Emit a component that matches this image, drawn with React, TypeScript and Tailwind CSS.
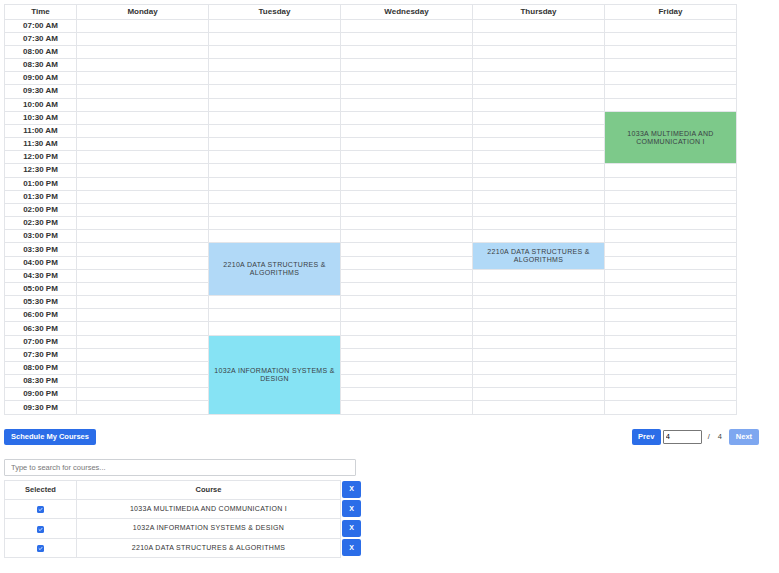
import React from 'react';

const days = ['Monday', 'Tuesday', 'Wednesday', 'Thursday', 'Friday'];

const times: string[] = [];
for (let h = 7; h <= 21; h++) {
  for (const m of ['00', '30']) {
    const hr = h > 12 ? h - 12 : h;
    const ap = h >= 12 ? 'PM' : 'AM';
    times.push(`${String(hr).padStart(2, '0')}:${m} ${ap}`);
  }
}

interface CourseEvent {
  day: number;
  start: number;
  span: number;
  title: string;
  color: string;
}

const events: CourseEvent[] = [
  { day: 4, start: 7, span: 4, title: '1033A MULTIMEDIA AND COMMUNICATION I', color: 'bg-[#7dc98a]' },
  { day: 1, start: 17, span: 4, title: '2210A DATA STRUCTURES & ALGORITHMS', color: 'bg-[#b1d9f7]' },
  { day: 3, start: 17, span: 2, title: '2210A DATA STRUCTURES & ALGORITHMS', color: 'bg-[#b1d9f7]' },
  { day: 1, start: 24, span: 6, title: '1032A INFORMATION SYSTEMS & DESIGN', color: 'bg-[#86e3f4]' },
];

const courses = [
  '1033A MULTIMEDIA AND COMMUNICATION I',
  '1032A INFORMATION SYSTEMS & DESIGN',
  '2210A DATA STRUCTURES & ALGORITHMS',
];

function CheckMark() {
  return (
    <span className="inline-flex w-[7px] h-[7px] rounded-[1.5px] bg-[#2b6de8] items-center justify-center align-middle">
      <svg width="5" height="5" viewBox="0 0 10 10" fill="none">
        <path d="M2 5.2 L4.2 7.3 L8 2.8" stroke="white" strokeWidth="1.6" strokeLinecap="round" strokeLinejoin="round" />
      </svg>
    </span>
  );
}

function XButton() {
  return (
    <button className="w-[19px] h-[17px] rounded-[2px] bg-[#2b6de8] text-white text-[7px] font-bold flex items-center justify-center">
      X
    </button>
  );
}

export default function App() {
  // cellen die door een event bezet zijn
  const covered = new Set<string>();
  const startAt = new Map<string, CourseEvent>();
  events.forEach((ev) => {
    startAt.set(`${ev.day}-${ev.start}`, ev);
    for (let i = 1; i < ev.span; i++) covered.add(`${ev.day}-${ev.start + i}`);
  });

  return (
    <div className="min-h-screen bg-white p-[4px] text-[#333] font-['Liberation_Sans',Arial,sans-serif]">
      {/* Rooster */}
      <table className="table-fixed border-collapse w-[733px]">
        <colgroup>
          <col className="w-[72px]" />
          {days.map((d) => (
            <col key={d} className="w-[132px]" />
          ))}
        </colgroup>
        <thead>
          <tr className="h-[14.5px]">
            <th className="border border-[#e3e5e9] text-[8px] font-bold leading-none p-0">Time</th>
            {days.map((d) => (
              <th key={d} className="border border-[#e3e5e9] text-[8px] font-bold leading-none p-0">
                {d}
              </th>
            ))}
          </tr>
        </thead>
        <tbody>
          {times.map((t, r) => (
            <tr key={t} className="h-[13.18px]">
              <td className="border border-[#e3e5e9] text-[8px] font-bold text-center leading-none p-0">{t}</td>
              {days.map((_, d) => {
                const key = `${d}-${r}`;
                if (covered.has(key)) return null;
                const ev = startAt.get(key);
                if (ev) {
                  return (
                    <td
                      key={key}
                      rowSpan={ev.span}
                      className={`border border-[#e3e5e9] ${ev.color} text-center align-middle px-[2px] py-0 text-[7px] leading-[8px] tracking-[0.3px] text-[#3a3f45]`}
                    >
                      {ev.title}
                    </td>
                  );
                }
                return <td key={key} className="border border-[#e3e5e9] p-0" />;
              })}
            </tr>
          ))}
        </tbody>
      </table>

      {/* Acties */}
      <div className="w-[755px] mt-[14px] flex items-center justify-between">
        <button className="h-[16px] px-[7px] rounded-[2px] bg-[#2b6de8] text-white text-[7.5px] font-bold">
          Schedule My Courses
        </button>
        <div className="flex items-center">
          <button className="h-[16px] w-[29px] rounded-[2px] bg-[#2b6de8] text-white text-[7.5px] font-bold">Prev</button>
          <input
            readOnly
            value="4"
            className="ml-[2px] w-[39px] h-[14px] border border-[#777] rounded-[1px] px-[2px] text-[7.5px] text-black outline-none"
          />
          <span className="ml-[6px] text-[7.5px] text-[#444]">/</span>
          <span className="ml-[8px] text-[7.5px] text-[#444]">4</span>
          <button className="ml-[7px] h-[16px] w-[30px] rounded-[2px] bg-[#7ea7f0] text-white text-[7.5px] font-bold">Next</button>
        </div>
      </div>

      {/* Zoeken */}
      <input
        placeholder="Type to search for courses..."
        className="mt-[14px] block w-[352px] h-[17px] border border-[#cfd2d6] rounded-[1px] px-[6px] text-[7.5px] placeholder:text-[#777] outline-none"
      />

      {/* Geselecteerde vakken */}
      <table className="mt-[4px] border-collapse">
        <thead>
          <tr className="h-[19px]">
            <th className="w-[72px] border border-[#e3e5e9] text-[7.5px] font-bold p-0">Selected</th>
            <th className="w-[264px] border border-[#e3e5e9] text-[7.5px] font-bold p-0">Course</th>
            <td className="p-0 pl-[1px]">
              <XButton />
            </td>
          </tr>
        </thead>
        <tbody>
          {courses.map((c) => (
            <tr key={c} className="h-[19.5px]">
              <td className="border border-[#e3e5e9] text-center p-0 leading-none">
                <CheckMark />
              </td>
              <td className="border border-[#e3e5e9] text-center text-[7px] tracking-[0.3px] text-[#333] p-0">{c}</td>
              <td className="p-0 pl-[1px]">
                <XButton />
              </td>
            </tr>
          ))}
        </tbody>
      </table>
    </div>
  );
}
